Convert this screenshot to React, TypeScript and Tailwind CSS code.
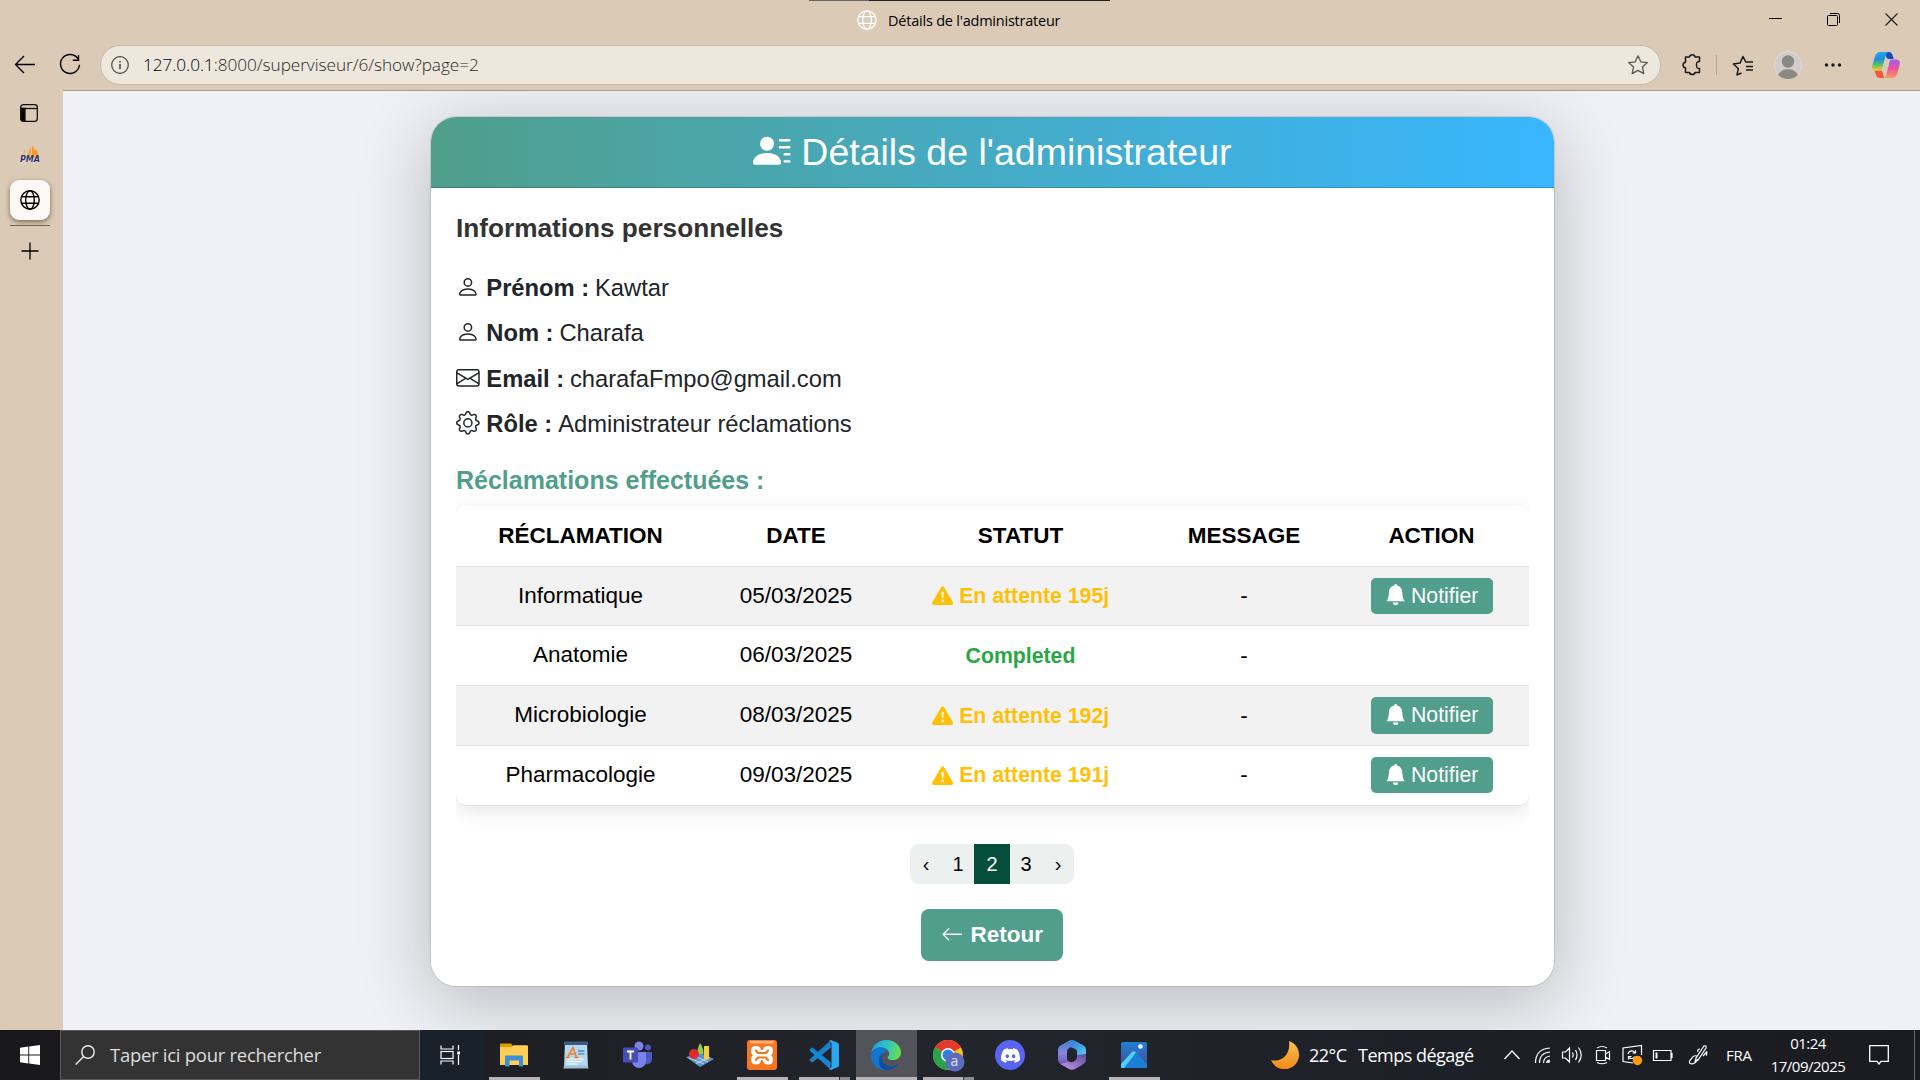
import React from "react";
import {
  BsPersonLinesFill,
  BsPerson,
  BsEnvelope,
  BsGear,
  BsExclamationTriangleFill,
  BsBellFill,
  BsArrowLeft,
  BsDiscord,
} from "react-icons/bs";

const UI = "font-['Open_Sans','Noto_Sans',sans-serif]";

function Globe({ className }: { className: string }) {
  return (
    <svg viewBox="0 0 20 20" fill="none" stroke="currentColor" className={className}>
      <circle cx="10" cy="10" r="9.2" />
      <ellipse cx="10" cy="10" rx="4.3" ry="9.2" />
      <path d="M1.6 6.7h16.8M1.6 13.3h16.8" />
    </svg>
  );
}

function TitleBar() {
  return (
    <div className="relative h-[45px] flex items-center justify-center">
      <div className="absolute top-0 left-[809px] w-[301px] h-px bg-[#222]" />
      <div className="absolute top-0 left-[809px] w-[60px] h-px bg-[#666]" />
      <div className="absolute left-[857px] top-[10px] flex items-center gap-[11px]">
        <Globe className="size-5 text-white stroke-[1.3]" />
        <span className="text-[14.5px] leading-[22px] h-5 w-[174px] whitespace-nowrap text-black tracking-[-0.220px]">Détails de l'administrateur</span>
      </div>
      <svg className="absolute left-[1760px] top-[8px] w-[150px] h-6" viewBox="0 0 150 24" fill="none" stroke="black">
        <path d="M9 10.5h13" />
        <rect x="67.5" y="7.5" width="10" height="10" rx="1" />
        <path d="M70 5.5h7.5a2 2 0 0 1 2 2V15" />
        <path d="M125.5 5.500l12 12M137.500 5.500l-12 12" stroke="#222" strokeWidth="1.200" />
      </svg>
    </div>
  );
}

function Toolbar() {
  return (
    <div className="h-[45px] flex items-start text-black">
      <svg className="w-[100px] h-10" viewBox="0 0 100 40" fill="none" stroke="black" strokeWidth="1.4">
        <path d="M35 19.500H16M24 11l-8.500 8.500L24 28" />
        <path d="M78 13.800a9.500 9.500 0 1 0 1.500 6M78.500 10v5.200h-5.700" />
      </svg>
      <div className="flex w-[1561px] h-[40px] items-center rounded-full border border-[#c3bab0] bg-[#eee7de] pl-[10px] pr-[11px]">
        <svg className="size-[18px]" viewBox="0 0 18 18" fill="none" stroke="#4a4744" strokeWidth="1.2">
          <circle cx="9" cy="9" r="8.300" />
          <path d="M9 8v5M9 5v1.600" strokeWidth="1.600" />
        </svg>
        <span className="ml-[14px] text-[17.200px] leading-6 whitespace-nowrap text-[#2a2826] font-light tracking-[-0.050px]">
          <span className="text-black">127.0.0.1</span>:8000/superviseur/6/show?page=2
        </span>
        <svg className="ml-auto size-[22px]" viewBox="0 0 22 22" fill="none" stroke="#5a5753" strokeWidth="1.3" strokeLinejoin="round">
          <path d="M11 1.800l2.800 6 6.600.8-4.900 4.500 1.300 6.500L11 16.400l-5.800 3.200 1.300-6.500L1.600 8.600l6.600-.8z" />
        </svg>
      </div>
      <svg className="w-[259px] h-10" viewBox="1661 0 259 40" fill="none" stroke="#1b1a19" strokeWidth="1.500" strokeLinejoin="round">
        <path d="M1685.500 12h4c.5-3 5-3 5.500 0h4.500v4.500c-2.700 0-3 1-3 3.500s.3 3.500 3 3.500V27.500h-4.500c-.5 2.700-5 2.700-5.500 0h-4v-4.700c-3.300-.5-3.300-5.100 0-5.600z" />
        <path d="M1716.500 10v20" stroke="#b0a595" strokeWidth="1" />
        <path d="M1741.500 28l-4.500 2 1.300-6.500-4.900-4.500 6.600-.9L1743 11.500l2.800 5.500H1753M1746 21.500h7M1746 25h7" />
        <circle cx="1788" cy="20" r="13.500" fill="#d0cdca" stroke="#dedbd8" strokeWidth="1" />
        <circle cx="1788" cy="16.500" r="6.200" fill="#8b8785" stroke="none" />
        <path d="M1778.200 30a10.500 9 0 0 1 19.600 0a14 14 0 0 1-19.600 0z" fill="#8b8785" stroke="none" />
        <g fill="#1b1a19" stroke="none">
          <circle cx="1826.500" cy="20" r="1.700" />
          <circle cx="1833" cy="20" r="1.700" />
          <circle cx="1839.500" cy="20" r="1.700" />
        </g>
        <defs>
          <linearGradient id="cpA" x1="0" y1="0" x2="0" y2="1">
            <stop offset="0" stopColor="#1fa9f0" />
            <stop offset=".4" stopColor="#1c8fd8" />
            <stop offset=".7" stopColor="#5fbf6a" />
            <stop offset="1" stopColor="#f3cf1a" />
          </linearGradient>
          <linearGradient id="cpB" x1="0" y1="0" x2="0" y2="1">
            <stop offset="0" stopColor="#a05cf0" />
            <stop offset=".5" stopColor="#e8559a" />
            <stop offset="1" stopColor="#ff9a5c" />
          </linearGradient>
        </defs>
        <g stroke="none">
          <path d="M1882 7h7q2.500 0 3.500 3l1.200 4h-5q-2 0-3-3.500z" fill="#1a49c8" />
          <path d="M1884 33h-4q-3 0-4-3l-1.500-4.500h6q2 0 2.500 3z" fill="#ef5a3c" />
          <path d="M1880 7h9q-2.500 0-3.500 4l-3 11q-1 3.500-4 3.500h-3q-4.500 0-3-6l2.500-8q1.500-4.500 5-4.500z" fill="url(#cpA)" />
          <path d="M1891 14.500h5q5 0 3.500 6l-2.300 8q-1.500 4.500-5.200 4.500h-9q2.500 0 3.500-4l2.500-10q1-4.500 2-4.500z" fill="url(#cpB)" />
        </g>
      </svg>
    </div>
  );
}

function SideTabs() {
  return (
    <div className="w-[63px] shrink-0 flex flex-col items-center pr-[3px] pt-[14px]">
      <svg className="size-[18px] mr-[2px]" viewBox="0 0 18 18" fill="none" stroke="#111" strokeWidth="1.300">
        <rect x=".7" y=".7" width="16.600" height="16.600" rx="2.500" />
        <path d="M1 4.500h16" />
        <path d="M1 4.500h4v12.500H2.500L1 15.500z" fill="#000" />
      </svg>
      <div className="mt-[23px] h-[21px] w-5 relative">
        <svg viewBox="0 0 20 14" className="w-5 h-[14px]">
          <path d="M1 13L5 3.500V13z" fill="#f8b25c" />
          <path d="M6 13L11 1v12z" fill="#f7a541" />
          <path d="M12 0l3 6 1-2 4 9h-8z" fill="#f7931e" />
        </svg>
        <span className="absolute left-0 top-[10px] text-[8px] leading-[10px] font-bold italic text-[#2f3268] font-['DejaVu_Sans',sans-serif] [text-shadow:0_0_2px_white]">PMA</span>
      </div>
      <div className="mt-[14px] size-10 shrink-0 rounded-[9px] bg-[#fbf8f5] flex items-center justify-center shadow-[0_2px_5px_rgba(60,45,25,0.6)]">
        <Globe className="size-5 text-black stroke-[1.400]" />
      </div>
      <div className="mt-[5px] h-px w-10 bg-[#6e655b]" />
      <svg className="mt-[16px] mr-px size-[18px]" viewBox="0 0 18 18" stroke="black" strokeWidth="1.300">
        <path d="M9 .5v17M.5 9h17" />
      </svg>
    </div>
  );
}

const infos = [
  { icon: BsPerson, label: "Prénom :", value: "Kawtar" },
  { icon: BsPerson, label: "Nom :", value: "Charafa" },
  { icon: BsEnvelope, label: "Email :", value: "charafaFmpo@gmail.com" },
  { icon: BsGear, label: "Rôle :", value: "Administrateur réclamations" },
];

const rows = [
  { name: "Informatique", date: "05/03/2025", wait: "195j" },
  { name: "Anatomie", date: "06/03/2025", wait: "" },
  { name: "Microbiologie", date: "08/03/2025", wait: "192j" },
  { name: "Pharmacologie", date: "09/03/2025", wait: "191j" },
];

const cols = "grid grid-cols-[249px_182px_267px_180px_195px] items-center text-center";

function Claims() {
  return (
    <div className="overflow-x-clip">
      <div className="w-[1073px] rounded-[10px] bg-white text-[22.500px] text-black shadow-[0_5px_19px_rgba(0,0,0,0.1)] mt-[-1px]">
        <div className={cols + " h-[61px] pt-px border-b border-[#dee2e6] font-bold"}>
          {["RÉCLAMATION", "DATE", "STATUT", "MESSAGE", "ACTION"].map((h) => (
            <div key={h}>{h}</div>
          ))}
        </div>
        {rows.map((r, i) => (
          <div key={r.name} className={cols + " h-[59.750px] border-b border-[#dee2e6] " + (i % 2 === 0 ? "bg-[#f2f2f2]" : "") + (i === 3 ? " rounded-b-[10px]" : "")}>
            <div className="pb-px">{r.name}</div>
            <div className="pb-px">{r.date}</div>
            <div className={"flex items-center justify-center text-[21.250px] font-bold pt-[2px] " + (r.wait ? "text-[#ffc107]" : "text-[#28a745]")}>
              {r.wait ? (
                <>
                  <BsExclamationTriangleFill className="size-[21.250px] mr-[6px] mb-[2px]" />
                  En attente {r.wait}
                </>
              ) : (
                "Completed"
              )}
            </div>
            <div>-</div>
            <div className="flex justify-center">
              {r.wait && (
                <button className="h-[36.500px] w-[122px] rounded-[5px] bg-[#509e8b] text-white text-[21.250px] flex items-center justify-center pt-px">
                  <BsBellFill className="size-[21.250px] mr-[5px] mb-[3px]" />
                  Notifier
                </button>
              )}
            </div>
          </div>
        ))}
      </div>
    </div>
  );
}

function Card() {
  return (
    <div className="w-[1123px] h-[869px] rounded-[25px] bg-white overflow-hidden flex flex-col">
      <div className="h-[71px] shrink-0 bg-linear-to-r from-[#509e8b] to-[#38b6ff] border-b border-black/20 flex items-center justify-center text-white text-[37.500px] leading-[45px] pt-px">
        <BsPersonLinesFill className="size-[37.500px] mr-[10.400px] mb-[4px]" />
        Détails de l'administrateur
      </div>
      <div className="px-[25px] flex flex-col">
        <h3 className="mt-[25px] text-[26.200px] leading-[30px] font-bold text-[#333]">Informations personnelles</h3>
        <div className="mt-[22px] flex flex-col text-[23.750px] text-[#212529]">
          {infos.map(({ icon: Icon, label, value }) => (
            <div key={label} className="flex items-center h-[45.400px] tracking-[-0.030px]">
              <Icon className="size-[23.750px] mr-[6.600px] mb-[2px]" />
              <strong className="mr-[6px]">{label}</strong>
              {value}
            </div>
          ))}
        </div>
        <h3 className="mt-[18px] mb-[12px] text-[25px] leading-[30px] font-bold text-[#509e8b]">Réclamations effectuées :</h3>
        <Claims />
        <div className="mt-[38px] ml-[454px] h-10 w-[164px] rounded-[9px] bg-[#ecf0ef] grid grid-cols-[32px_32px_36px_32px_32px] items-center text-center text-[20px] leading-[40px] text-black overflow-hidden">
          <span>‹</span>
          <span>1</span>
          <span className="bg-[#054e3b] text-white">2</span>
          <span>3</span>
          <span>›</span>
        </div>
        <button className="mt-[25px] ml-[465px] h-[52px] w-[142px] rounded-[8px] bg-[#509e8b] text-white text-[22.500px] font-bold flex items-center justify-center">
          <BsArrowLeft className="size-[22.500px] mr-[7px] mb-px" />
          Retour
        </button>
      </div>
    </div>
  );
}

function Slot({ children, bar, active, split }: { children: React.ReactNode; bar?: boolean; active?: boolean; split?: boolean }) {
  return (
    <div className={"relative h-[50px] w-[61px] mr-px shrink-0 flex items-center justify-center " + (active ? "bg-[#52545a]" : "")}>
      {children}
      {bar && <div className={"absolute bottom-0 h-[3px] bg-[#b8b3b6] " + (active ? "inset-x-0" : "inset-x-[5px]")} />}
      {split && <div className="absolute bottom-0 right-[5px] h-[3px] w-[11px] bg-[#8d898c] border-l border-[#333]" />}
    </div>
  );
}

function Taskbar() {
  return (
    <div className={"h-[50px] flex bg-linear-to-r from-[#19191b] via-[#23252d] to-[#191b21] text-white " + UI}>
      <div className="w-[60px] shrink-0 flex items-center justify-center">
        <svg viewBox="0 0 20 20" className="size-5" fill="white">
          <path d="M0 2.800l8.300-1.200v8H0zM9.200 1.500L20 0v9.600H9.200zM0 10.500h8.300v8L0 17.300zM9.200 10.500H20V20L9.200 18.500z" />
        </svg>
      </div>
      <div className="w-[360px] shrink-0 bg-[#333] border border-[#5a5a5a] flex items-center pl-[14px]">
        <svg viewBox="0 0 20 20" className="size-5" fill="none" stroke="#eee" strokeWidth="1.400">
          <circle cx="13" cy="7" r="6.200" />
          <path d="M8.700 11.400L.7 19.400" />
        </svg>
        <span className="ml-[15px] text-[18.500px] tracking-[-0.280px] text-[#dcdcdc] whitespace-nowrap">Taper ici pour rechercher</span>
      </div>
      <div className="w-[64px] shrink-0 bg-[#19212b] flex items-center pl-5">
        <svg viewBox="0 0 20 20" className="size-5" fill="none" stroke="white" strokeWidth="1.200">
          <path d="M1 .5v3.500h12V.5M1 19.500V16h12v3.500M18.500 0v5M18.500 10v10" />
          <rect x="1" y="6.500" width="12" height="7" />
          <rect x="17.200" y="6.500" width="2.800" height="3" fill="white" stroke="none" />
        </svg>
      </div>
      <Slot bar>
        <svg viewBox="0 0 28 24" className="w-7 h-6 mr-[2px] mb-px">
          <path d="M0 1.500Q0 .5 1 .5h10l2.500 3.500H0z" fill="#e09b00" />
          <path d="M0 4h11.500l2-1.700H27q1 0 1 1V22H0z" fill="#ffcf55" />
          <path d="M5 23.500V13.500q0-1 1-1h16q1 0 1 1v10h-4V17.500h-9.500v6z" fill="#3b90d8" />
        </svg>
      </Slot>
      <Slot>
        <svg viewBox="0 0 26 28" className="w-[26px] h-7 mr-px mb-px">
          <path d="M2 1h22l1 26H1z" fill="#b5d8ee" />
          <path d="M1 .5h24v3.500H1z" fill="#3a5c80" />
          <path d="M4 18h17M4 20.500h15M4 23h10" stroke="white" />
          <path d="M15 10h6.500M15 12.800h6.500" stroke="#4d86c4" strokeWidth="1.300" />
          <path d="M4.500 16.500L10 6.500l3.500 10M7 13h5.500M3 16.500h3.500M11.500 16.500h4" stroke="#f08030" strokeWidth="1.700" fill="none" />
          <path d="M1 24.500h24l.5 3H.5z" fill="#9dc0da" />
        </svg>
      </Slot>
      <Slot>
        <svg viewBox="0 0 30 28" className="w-[30px] h-7 mr-[2px]">
          <circle cx="25" cy="6.500" r="3" fill="#4e56c0" />
          <path d="M20 11h9v8a5 5 0 0 1-9 2z" fill="#4e56c0" />
          <circle cx="16" cy="5" r="4.500" fill="#7b83eb" />
          <path d="M9 11h14v9a7 7 0 0 1-14 0z" fill="#7b83eb" />
          <rect y="6.500" width="15" height="15" rx="1.200" fill="#464eb8" />
          <path d="M4 10.500h7M7.500 10.500v8" stroke="white" strokeWidth="1.800" />
        </svg>
      </Slot>
      <Slot>
        <svg viewBox="0 0 28 24" className="w-7 h-6 mr-[2px] mb-px">
          <path d="M0 14l14-4 14 6-14 8z" fill="#5d94cf" />
          <path d="M3 15l15 6M8 13l14 6M10 20.500l14-6" stroke="#d0e2f5" strokeWidth=".800" fill="none" />
          <path d="M14 0q4 6 3.500 11h-6q-1-4 2.500-11z" fill="#8fcf4c" />
          <circle cx="8" cy="11" r="5" fill="#e02a2a" />
          <path d="M18 3h5v13q-2.500 1.500-5 0z" fill="#f4cf3c" />
        </svg>
      </Slot>
      <Slot bar>
        <svg viewBox="0 0 30 30" className="size-[30px] mr-px">
          <rect width="30" height="30" rx="3" fill="#f5761f" />
          <rect x="3" y="1" width="24" height="2.500" rx="1.200" fill="#ffb080" />
          <g fill="white">
            <rect x="4" y="6" width="10" height="10" rx="4.500" />
            <rect x="16" y="6" width="10" height="10" rx="4.500" />
            <rect x="4" y="14.500" width="10" height="10" rx="4.500" />
            <rect x="16" y="14.500" width="10" height="10" rx="4.500" />
            <rect x="8.500" y="10" width="13" height="10" />
          </g>
          <g stroke="#f5761f" strokeWidth="2.200" strokeLinecap="round" fill="none">
            <path d="M9 10.500l2 2.500h8l2-2.500M9 20l2-2.500h8l2 2.500" />
          </g>
        </svg>
      </Slot>
      <Slot bar split>
        <svg viewBox="0 0 30 30" className="size-[30px] mr-px">
          <path d="M22 7.500L3.500 22.500 1 21q-1-1 0-2L21 1z" fill="#1a7fc9" />
          <path d="M22 22.500L3.500 7.500 1 9q-1 1 0 2L21 29z" fill="#1287d3" />
          <path d="M22 0l7 3q1 .5 1 1.500v21q0 1-1 1.500l-7 3q-1 0-2-1l2.500-2V3L20 1q1-1 2-1z" fill="#2ba6f0" />
        </svg>
      </Slot>
      <Slot bar active>
        <svg viewBox="0 0 30 30" className="size-[30px] mr-px">
          <defs>
            <linearGradient id="edG" x1="0" x2="1" y1=".3" y2=".5">
              <stop offset="0" stopColor="#1d9fe0" />
              <stop offset=".5" stopColor="#2cc4c8" />
              <stop offset="1" stopColor="#6be04a" />
            </linearGradient>
          </defs>
          <path d="M0 14C1 5 8 0 15 0c9 0 15 6 15 12.500 0 5-4 7.500-8 7.500-5 0-6-2-5-3.500 1-1.200 1.500-2 1.200-3.500C17 9 13 7.500 9.500 7.500 5 7.500 1 10 0 14z" fill="url(#edG)" />
          <path d="M0 15C1 10 5 7.500 9.500 7.500c3.500 0 6 1.300 7.500 3-4 .5-6.500 4-6.500 8 0 6 6 9.500 10 10.500-9 3.500-21-2-20.500-14z" fill="#1376cf" />
          <path d="M13 12.500c-4 4-2.500 12 5 13.500 4.500.8 7-.500 9.500-3-3.500 6-8.500 7.500-13 7-5-1-8-6-6.500-11 .8-3 3-5.500 5-6.500z" fill="#104f9f" />
        </svg>
      </Slot>
      <Slot bar split>
        <div className="relative size-8 mt-[2px]">
          <svg viewBox="0 0 32 32" className="size-8">
            <circle cx="15" cy="15" r="15" fill="#fbc116" />
            <path d="M15 15L2 7.500a15 15 0 0 1 26 0z" fill="#e33b2e" />
            <path d="M15 15L2 7.500A15 15 0 0 0 15 30l6-11z" fill="#2ba24c" />
            <circle cx="15" cy="15" r="7" fill="white" />
            <circle cx="15" cy="15" r="5.500" fill="#2f7de1" />
            <circle cx="22" cy="22" r="9.500" fill="#5c6bc0" />
          </svg>
          <span className="absolute left-[18px] top-[12px] text-[14px] leading-[18px] text-[#dfe2f5]">a</span>
        </div>
      </Slot>
      <Slot>
        <div className="size-[30px] mr-px rounded-full bg-[#5865f2] flex items-center justify-center">
          <BsDiscord className="size-[19px]" />
        </div>
      </Slot>
      <Slot>
        <svg viewBox="0 0 28 30" className="w-7 h-[30px] mr-px">
          <defs>
            <linearGradient id="mA" x1="0" x2="1" y1="0" y2="1">
              <stop offset="0" stopColor="#2d6fd6" />
              <stop offset="1" stopColor="#5fd0f5" />
            </linearGradient>
            <linearGradient id="mB" x1="0" x2="1" y1="1" y2="0">
              <stop offset="0" stopColor="#c79be8" />
              <stop offset="1" stopColor="#5a4a9c" />
            </linearGradient>
            <linearGradient id="mC" x1="0" x2="0" y1="0" y2="1">
              <stop offset="0" stopColor="#3f7fd8" />
              <stop offset=".5" stopColor="#8a86dd" />
              <stop offset="1" stopColor="#6a4fae" />
            </linearGradient>
          </defs>
          <path d="M11 .8q3-1.500 6 0l8.500 4.700Q28 7 28 9.500v8L19 16v-4q0-2-1.500-3L9 6z" fill="url(#mA)" />
          <path d="M15 0L12 7.500q-3 1.500-3 4v7q0 2 2 3l-5 4.500-3.500-2Q0 22.500 0 20V9.500Q0 7 2.500 5.500L11 .8Q13 0 15 0z" fill="url(#mC)" />
          <path d="M2.500 24l8.500-2.500q3 1.500 5 0t3-3.500v-3l9-1v6q0 2.500-2.500 4L17 29q-3 1.500-6 0z" fill="url(#mB)" />
        </svg>
      </Slot>
      <Slot bar>
        <svg viewBox="0 0 26 26" className="size-[26px] mr-px">
          <defs>
            <linearGradient id="phA" x1="0" x2="0" y1="0" y2="1">
              <stop offset="0" stopColor="#1b83d3" />
              <stop offset=".6" stopColor="#3d5cae" />
              <stop offset="1" stopColor="#4b3f96" />
            </linearGradient>
          </defs>
          <rect width="26" height="26" rx="2" fill="url(#phA)" />
          <path d="M0 22L11 10q2-1.500 4 0l11 12v4H0z" fill="#1b7fd6" />
          <path d="M0 22L11 10q2-1.500 4 .500L3 26H0z" fill="#4fd2f5" />
          <circle cx="19.500" cy="4.500" r="2.300" fill="white" />
        </svg>
      </Slot>
      <div className="w-[338px] shrink-0 flex items-center pl-[105px]">
        <svg viewBox="0 0 28 28" className="size-7 shrink-0">
          <defs>
            <linearGradient id="moon" x1="0" x2="0" y1="0" y2="1">
              <stop offset="0" stopColor="#f9c04a" />
              <stop offset="1" stopColor="#f08a1c" />
            </linearGradient>
          </defs>
          <path d="M18 0a14.500 14.500 0 1 1-18 19C11 22 20 13 18 0z" fill="url(#moon)" />
        </svg>
        <span className="ml-[10px] w-[49px] shrink-0 text-[18px] tracking-[-0.5px] whitespace-nowrap">22°C</span>
        <span className="text-[18px] tracking-[-0.500px] whitespace-nowrap">Temps dégagé</span>
      </div>
      <svg viewBox="1504 0 210 50" className="w-[210px] h-[50px] shrink-0" fill="none" stroke="white" strokeWidth="1.200">
        <path d="M1504.500 29l7.500-8 7.500 8" />
        <path d="M1535.500 33q0-14 14.500-15M1539.500 33q0-10 10.500-11M1543.500 33q0-6 6.500-7" />
        <path d="M1546.500 33q0-2.500 3.500-3" />
        <circle cx="1548.500" cy="31.500" r="1.500" fill="white" stroke="none" />
        <path d="M1562.500 22v6h3l4 4V18l-4 4zM1572.500 22.500q1.500 2.500 0 5M1575.500 20q3 5 0 10M1578.500 17.500q5.500 7.500 0 15" />
        <path d="M1596.500 20.500h9v10h-9zM1605.500 24l4-2.500v8l-4-2.500zM1597 18q5-3 10 0M1597 32.500q5 2.500 10 0" />
        <path d="M1641.500 25v-9.500l-18.500 2.500v13.500l10 1.500M1628 24q1-4 5-3l2 1.500M1635.500 20v3h-3M1635 26.500q-2 3-5.500 1.500l-1-1M1628.500 29.500v-3h3" />
        <circle cx="1637.500" cy="30.500" r="4.700" fill="#ff9a0a" stroke="none" />
        <path d="M1653.500 20.500h17.500v10h-17.500zM1671 23.500h1v4h-1" />
        <path d="M1656.500 22.500v6" strokeWidth="2" />
        <path d="M1695 32l1-4 8-12q2.500-1 2 2l-8 12zM1697 26q-4-1-5 2-5 5-.5 6 4 0 6-5M1698 22q-1-3 2-3M1703 26l4-4.500q-1 4 0 4" />
      </svg>
      <div className="flex items-center shrink-0">
        <span className="ml-[12px] w-[44px] text-[15px] tracking-[-0.300px]">FRA</span>
        <div className="w-[76px] text-center text-[15px] leading-[23px] tracking-[-0.500px] whitespace-nowrap">
          <div>01:24</div>
          <div>17/09/2025</div>
        </div>
        <svg viewBox="0 0 20 20" className="ml-[23px] size-5" fill="none" stroke="white" strokeWidth="1.300">
          <path d="M.7.700h18.600v15.600H12L10 19l-2-2.700H.7z" />
        </svg>
        <div className="ml-[25px] h-[50px] w-px bg-[#666]" />
      </div>
    </div>
  );
}

export default function App() {
  return (
    <div className="w-[1920px] h-[1080px] overflow-hidden flex flex-col bg-[#dbcab6] font-['Liberation_Sans',Arial,sans-serif]">
      <div className={UI}>
        <TitleBar />
        <Toolbar />
      </div>
      <div className="flex h-[940px]">
        <SideTabs />
        <main className="flex-1 overflow-hidden bg-[#f0f1f6] border-t border-[#ab9a84] flex justify-center items-start pt-[26px] pl-[2px]">
          <div className="rounded-[25px] shadow-[0_15px_72px_rgba(0,0,0,0.24),0_0_0_1px_rgba(0,0,0,0.1)]">
            <Card />
          </div>
        </main>
      </div>
      <Taskbar />
    </div>
  );
}
